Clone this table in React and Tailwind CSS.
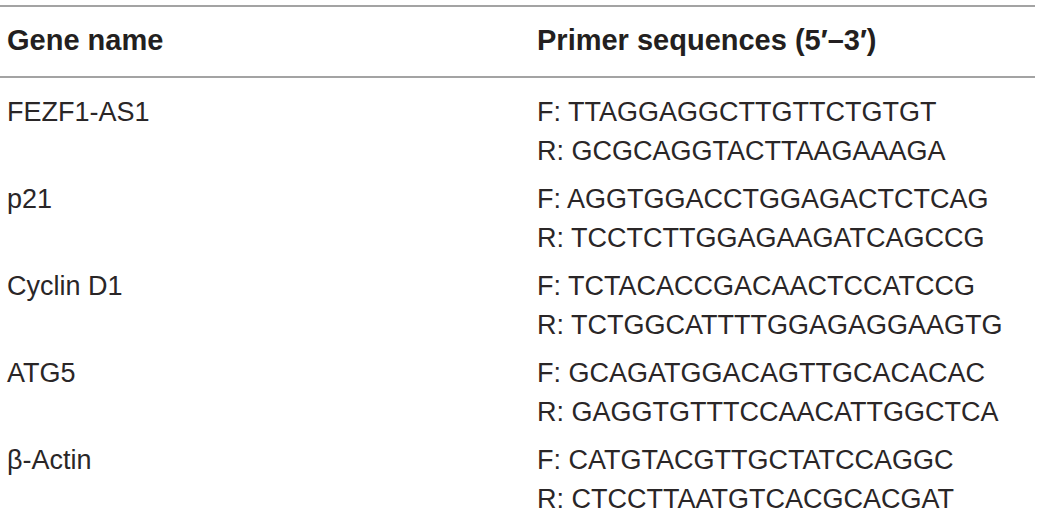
const rows = [
  { gene: "FEZF1-AS1", f: "TTAGGAGGCTTGTTCTGTGT", r: "GCGCAGGTACTTAAGAAAGA" },
  { gene: "p21", f: "AGGTGGACCTGGAGACTCTCAG", r: "TCCTCTTGGAGAAGATCAGCCG" },
  { gene: "Cyclin D1", f: "TCTACACCGACAACTCCATCCG", r: "TCTGGCATTTTGGAGAGGAAGTG" },
  { gene: "ATG5", f: "GCAGATGGACAGTTGCACACAC", r: "GAGGTGTTTCCAACATTGGCTCA" },
  { gene: "β-Actin", f: "CATGTACGTTGCTATCCAGGC", r: "CTCCTTAATGTCACGCACGAT" },
];

export default function App() {
  return (
    <div className="h-[515px] w-[1040px] overflow-hidden bg-white font-['Liberation_Sans',Arial,sans-serif] text-[#231f20]">
      <div className="mt-[5px] w-[1035px]">
        {/* header */}
        <div className="flex border-y-2 border-[#a3a3a3] pt-[14px] pb-[16px] text-[29px] font-bold leading-[39px]">
          <div className="w-[537px] pl-[7px]">Gene name</div>
          <div>Primer sequences (5′–3′)</div>
        </div>

        {/* body */}
        <div className="flex flex-col gap-[9px] pt-[15px] text-[27px] leading-[39px] text-[#2a2627]">
          {rows.map((row) => (
            <div key={row.gene} className="flex">
              <div className="w-[537px] pl-[7px]">{row.gene}</div>
              <div className="flex flex-col">
                <span>F: {row.f}</span>
                <span>R: {row.r}</span>
              </div>
            </div>
          ))}
        </div>
      </div>
    </div>
  );
}
